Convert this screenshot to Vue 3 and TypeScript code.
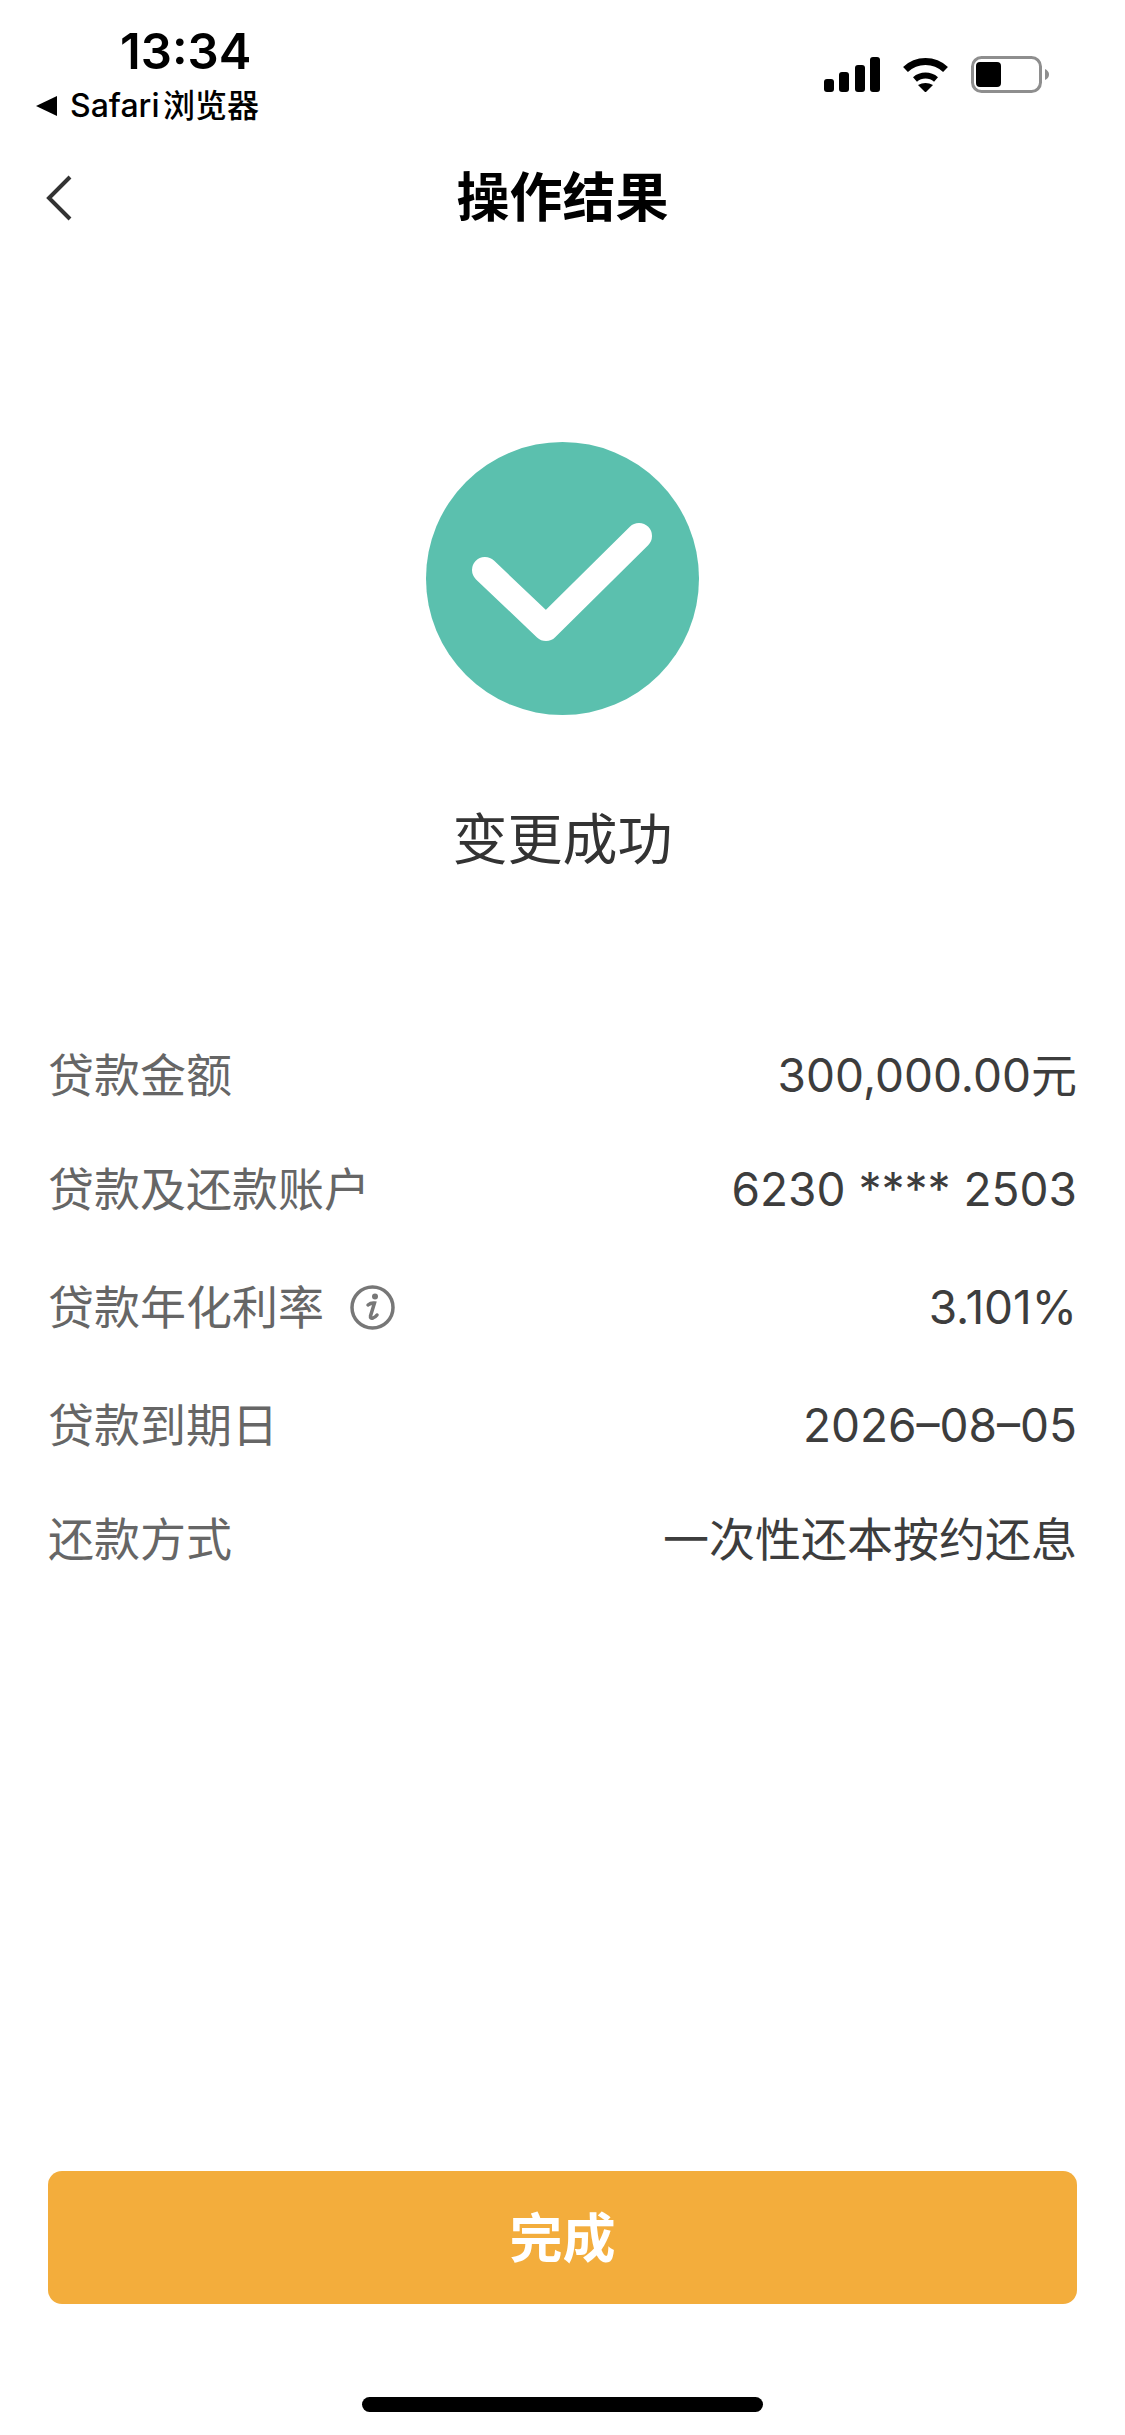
<template>
  <div class="page">
    <div class="status">
      <div class="status-left">
        <div class="time">13:34</div>
        <div class="back-app">
          <span class="tri"></span>
          <span>Safari 浏览器</span>
        </div>
      </div>
      <div class="status-right">
        <svg class="signal" width="56" height="35" viewBox="0 0 56 35">
          <rect x="0" y="22" width="10" height="13" rx="3" />
          <rect x="15" y="15" width="10" height="20" rx="3" />
          <rect x="31" y="8" width="10" height="27" rx="3" />
          <rect x="46" y="0" width="10" height="35" rx="3" />
        </svg>
        <svg class="wifi" width="47" height="35" viewBox="0 0 47 35">
          <path d="M3.5 12.5A29 29 0 0 1 43.5 12.5" fill="none" stroke="#000" stroke-width="7" />
          <path d="M13 22.5A16 16 0 0 1 34 22.5" fill="none" stroke="#000" stroke-width="6" />
          <path d="M16 28Q23.5 24 31 28L23.5 35.5Z" fill="#000" />
        </svg>
        <svg class="battery" width="78" height="37" viewBox="0 0 78 37">
          <rect x="1.5" y="1.5" width="68" height="34" rx="9" fill="none" stroke="#8e8e8e" stroke-width="3" />
          <rect x="5" y="6" width="25" height="25" rx="4" fill="#000" />
          <path d="M74 13Q78 15 78 18.500Q78 22 74 24Z" fill="#8e8e8e" />
        </svg>
      </div>
    </div>

    <div class="nav">
      <svg class="back" width="26" height="46" viewBox="0 0 26 46">
        <path d="M24 2L3 23L24 44" fill="none" stroke="#333" stroke-width="4" />
      </svg>
      <div class="nav-title">操作结果</div>
      <span></span>
    </div>

    <div class="hero">
      <svg width="273" height="273" viewBox="0 0 273 273">
        <circle cx="136.500" cy="136.500" r="136.500" fill="#5bc0ae" />
        <path d="M59 128L120 186L213 94" fill="none" stroke="#fff" stroke-width="26" stroke-linecap="round" stroke-linejoin="round" />
      </svg>
      <div class="hero-text">变更成功</div>
    </div>

    <div class="rows">
      <div v-for="row in rows" :key="row.label" class="row" :class="{ tall: row.info }">
        <div class="label">
          {{ row.label }}
          <svg v-if="row.info" class="info" width="45" height="45" viewBox="0 0 45 45">
            <circle cx="22.500" cy="22.500" r="20.500" fill="none" stroke="#777" stroke-width="3.500" />
            <circle cx="25" cy="11.500" r="3" fill="#777" />
            <path d="M18 20Q21 17.500 24.500 18L20.500 31Q20 34 23 33Q25.500 32 27 30" fill="none" stroke="#777" stroke-width="3.500" stroke-linecap="round" />
          </svg>
        </div>
        <div class="value">{{ row.value }}</div>
      </div>
    </div>

    <div class="spacer"></div>

    <button class="done">完成</button>
    <div class="home-bar"></div>
  </div>
</template>

<script setup lang="ts">
interface Row {
  label: string
  value: string
  info?: boolean
}

const rows: Row[] = [
  { label: '贷款金额', value: '300,000.00元' },
  { label: '贷款及还款账户', value: '6230 **** 2503' },
  { label: '贷款年化利率', value: '3.101%', info: true },
  { label: '贷款到期日', value: '2026–08–05' },
  { label: '还款方式', value: '一次性还本按约还息' }
]
</script>

<style scoped>
.page {
  width: 1125px;
  height: 2435px;
  background: #fff;
  display: flex;
  flex-direction: column;
  font-family: Inter, "Noto Sans CJK SC", sans-serif;
  overflow: hidden;
}

.status {
  height: 170px;
  display: flex;
  justify-content: space-between;
  align-items: flex-start;
  padding: 0 76px 0 36px;
  box-sizing: border-box;
}

.time {
  padding: 24px 0 0 84px;
  font-size: 49px;
  line-height: 56px;
  font-weight: 600;
  color: #000;
}

.back-app {
  display: flex;
  align-items: center;
  gap: 13px;
  margin-top: 8px;
  font-size: 32px;
  line-height: 36px;
  font-weight: 500;
  word-spacing: -5px;
  color: #000;
}

.tri {
  width: 0;
  height: 0;
  border-style: solid;
  border-width: 10px 21px 10px 0;
  border-color: transparent #000 transparent transparent;
}

.status-right {
  display: flex;
  align-items: center;
  gap: 22px;
  margin-top: 56px;
}

.nav {
  display: grid;
  grid-template-columns: 1fr auto 1fr;
  align-items: center;
  height: 56px;
  padding: 0 46px;
}

.nav-title {
  font-size: 53px;
  line-height: 56px;
  font-weight: 700;
  color: #000;
}

.hero {
  display: flex;
  flex-direction: column;
  align-items: center;
  margin-top: 216px;
}

.hero-text {
  margin-top: 92px;
  font-size: 55px;
  line-height: 64px;
  color: #333;
}

.rows {
  margin-top: 147px;
  padding: 0 48px;
}

.row {
  height: 114px;
  padding-top: 25px;
  box-sizing: border-box;
  display: flex;
  justify-content: space-between;
  align-items: baseline;
  font-size: 46px;
  line-height: 64px;
}

.row.tall {
  height: 122px;
  padding-top: 29px;
}

.label {
  display: flex;
  align-items: center;
  gap: 26px;
  color: #666;
}

.value {
  color: #3d3d3d;
}

.spacer {
  flex: 1;
}

.done {
  display: block;
  margin: 0 48px;
  height: 133px;
  padding: 0 0 5px;
  border: none;
  border-radius: 14px;
  background: #f3ad3c;
  color: #fff;
  font-family: inherit;
  font-size: 53px;
  font-weight: 700;
}

.home-bar {
  width: 401px;
  height: 15px;
  margin: 93px auto 23px;
  border-radius: 8px;
  background: #000;
}
</style>
